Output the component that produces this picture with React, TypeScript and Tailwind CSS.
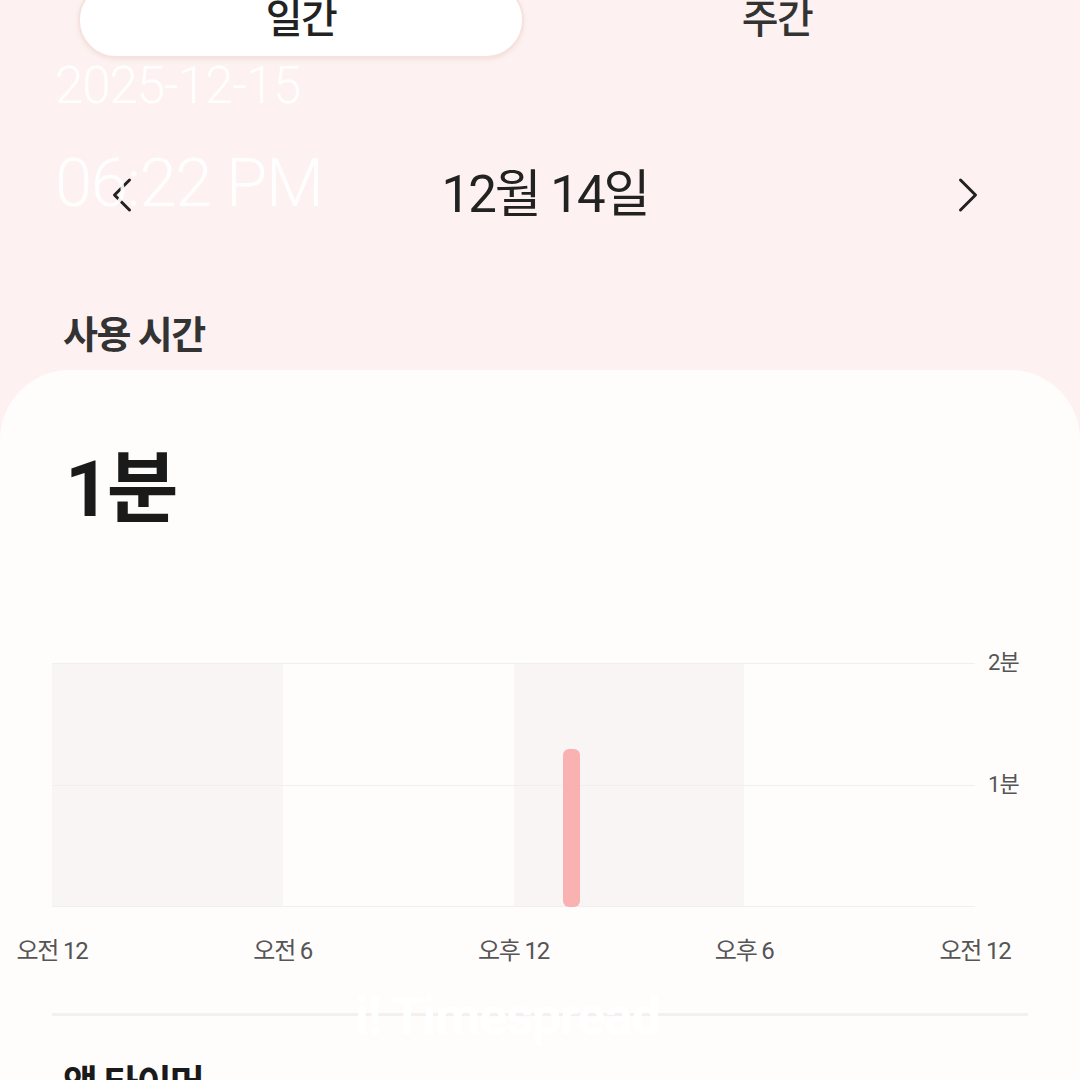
import { ChevronLeft, ChevronRight } from 'lucide-react';

const KR = { fontFamily: 'Roboto, "Noto Sans CJK KR", "Noto Sans", sans-serif' };

const xLabels = ['오전 12', '오전 6', '오후 12', '오후 6', '오전 12'];

function UsageChart() {
  return (
    <div className="mt-[133px]">
      {/* 차트 본체 + y축 라벨 */}
      <div className="flex">
        <div className="relative w-[923px] h-[244px] grid grid-cols-4">
          <div className="bg-[#f9f5f4]" />
          <div className="bg-[#fffcfc]" />
          <div className="bg-[#f9f5f4]" />
          <div className="bg-[#fffcfc]" />
          {/* 가로 그리드 */}
          <div className="absolute inset-x-0 top-0 h-px bg-[#f3eeee]" />
          <div className="absolute inset-x-0 top-[122px] h-px bg-[#f3eeee]" />
          <div className="absolute inset-x-0 bottom-0 h-px bg-[#f3eeee]" />
          {/* 막대 */}
          <div className="absolute left-[511px] bottom-0 w-[17px] h-[158px] rounded-[6px] bg-[#f9b2b1]" />
        </div>
        <div className="flex flex-col justify-between h-[244px] pl-[13px] -mt-[13px] text-[22px] leading-[26px] text-[#555] tracking-[-0.04em]">
          <span>2분</span>
          <span className="mb-[96px]">1분</span>
        </div>
      </div>
      {/* x축 라벨 */}
      <div className="w-[923px] flex justify-between mt-[29px]">
        {xLabels.map((l, i) => (
          <div key={i} className="w-0 flex justify-center">
            <span className="whitespace-nowrap text-[24px] leading-[30px] text-[#555] tracking-[-0.05em]">{l}</span>
          </div>
        ))}
      </div>
    </div>
  );
}

export default function App() {
  return (
    <div className="relative w-[1080px] h-[1080px] overflow-hidden bg-[#fdf2f1] text-[#222]" style={KR}>
      {/* 일간 / 주간 탭 */}
      <div className="flex gap-[30px] px-[78px] -mt-[18px]">
        <div className="w-[446px] h-[76px] rounded-full bg-white border-2 border-[#f6e2df] shadow-[0_2px_4px_rgba(230,200,196,0.4)] flex items-center justify-center">
          <span className="text-[40px] font-medium tracking-[-0.04em]">일간</span>
        </div>
        <div className="w-[446px] h-[76px] flex items-center justify-center">
          <span className="text-[40px] font-medium tracking-[-0.04em] text-[#333]">주간</span>
        </div>
      </div>

      {/* 날짜 이동 */}
      <div className="mt-[105px] h-[64px] flex items-center justify-between pl-[92px] pr-[82px]">
        <ChevronLeft size={60} strokeWidth={1.2} className="text-[#222]" />
        <span className="text-[51px] tracking-[-0.04em] text-[#222]">12월 14일</span>
        <ChevronRight size={60} strokeWidth={1.2} className="text-[#222]" />
      </div>

      <div className="mt-[80px] pl-[63px]">
        <span className="text-[38px] font-semibold tracking-[-0.04em] text-[#333]">사용 시간</span>
      </div>

      {/* 카드 */}
      <div className="mt-[6px] h-[720px] rounded-t-[70px] bg-[#fffcfc] px-[52px] pt-[80px]">
        <div className="pl-[13px] text-[78px] leading-[80px] font-bold tracking-[-0.04em] text-[#1a1a1a]">1분</div>
        <UsageChart />
        <div className="mt-[47px] h-[3px] bg-[#f5efef]" />
        <div className="mt-[40px] pl-[11px] text-[38px] font-bold tracking-[-0.05em] text-[#1a1a1a]">앱 타이머</div>
      </div>

      {/* 워터마크 오버레이 */}
      <div className="absolute left-[55px] top-[58px] text-white/90 pointer-events-none" style={{ fontFamily: 'Roboto, sans-serif' }}>
        <div className="text-[51px] font-light leading-[56px] tracking-[-0.02em]">2025-12-15</div>
        <div className="mt-[32px] text-[67px] font-light leading-[74px] tracking-[-0.02em]">06:22 PM</div>
      </div>
      <div className="absolute left-[355px] top-[978px] text-white text-[52px] font-bold tracking-[-0.02em] pointer-events-none" style={{ fontFamily: 'Roboto, sans-serif' }}>
        i! Timespread
      </div>
    </div>
  );
}
